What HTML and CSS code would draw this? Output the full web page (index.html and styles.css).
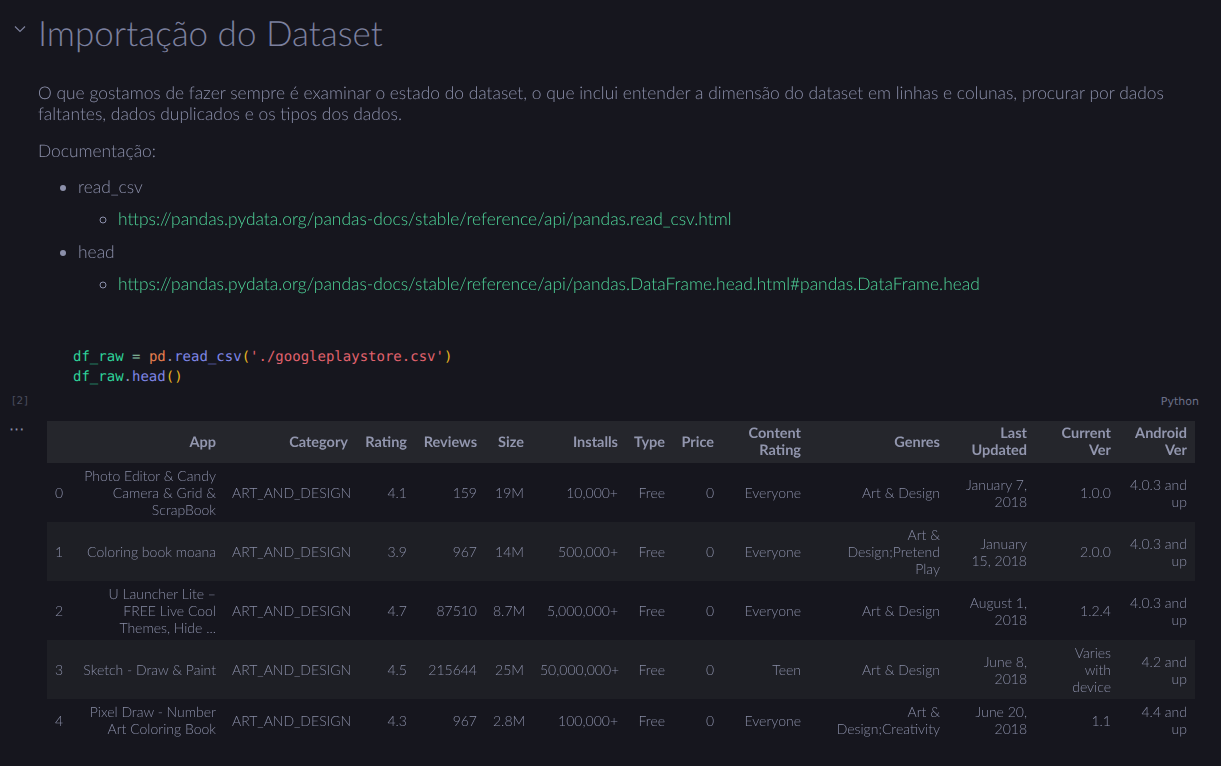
FILE: index.html
```html
<!DOCTYPE html>
<html lang="pt">
<head>
<meta charset="utf-8">
<title>Importação do Dataset</title>
<link rel="stylesheet" href="styles.css">
</head>
<body>
<div class="notebook">
  <section class="md-cell">
    <div class="md-head">
      <svg class="chevron" width="12" height="12" viewBox="0 0 12 12"><path d="M1 3.5 L6 8.5 L11 3.5" fill="none" stroke="#7c809c" stroke-width="1.2"/></svg>
      <h1 class="title">Importação do Dataset</h1>
    </div>
    <div class="md-body">
      <p>O que gostamos de fazer sempre é examinar o estado do dataset, o que inclui entender a dimensão do dataset em linhas e colunas, procurar por dados faltantes, dados duplicados e os tipos dos dados.</p>
      <p>Documentação:</p>
      <ul class="docs">
        <li>read_csv
          <ul class="sub"><li><a href="#">https://pandas.pydata.org/pandas-docs/stable/reference/api/pandas.read_csv.html</a></li></ul>
        </li>
        <li>head
          <ul class="sub"><li><a href="#">https://pandas.pydata.org/pandas-docs/stable/reference/api/pandas.DataFrame.head.html#pandas.DataFrame.head</a></li></ul>
        </li>
      </ul>
    </div>
  </section>

  <section class="code-cell">
    <pre class="code"><span class="v">df_raw</span> <span class="op">=</span> <span class="m">pd</span><span class="d">.</span><span class="f">read_csv</span><span class="p">(</span><span class="s">'./googleplaystore.csv'</span><span class="p">)</span>
<span class="v">df_raw</span><span class="d">.</span><span class="f">head</span><span class="p">()</span></pre>
    <div class="status">
      <span class="exec">[2]</span>
      <span class="lang">Python</span>
    </div>
    <div class="output-row">
      <div class="out-gutter">···</div>
      <div class="output">
        <table class="df">
          <colgroup>
            <col style="width:25px"><col style="width:152px"><col style="width:132px"><col style="width:59px"><col style="width:70px"><col style="width:47px"><col style="width:94px"><col style="width:47px"><col style="width:49px"><col style="width:87px"><col style="width:139px"><col style="width:87px"><col style="width:84px"><col style="width:76px">
          </colgroup>
          <thead>
            <tr><th></th><th>App</th><th>Category</th><th>Rating</th><th>Reviews</th><th>Size</th><th>Installs</th><th>Type</th><th>Price</th><th>Content Rating</th><th>Genres</th><th>Last Updated</th><th>Current Ver</th><th>Android Ver</th></tr>
          </thead>
          <tbody>
            <tr><th>0</th><td>Photo Editor &amp; Candy Camera &amp; Grid &amp; ScrapBook</td><td class="cat">ART_AND_DESIGN</td><td>4.1</td><td>159</td><td>19M</td><td>10,000+</td><td>Free</td><td>0</td><td>Everyone</td><td class="genre">Art &amp; Design</td><td class="date">January 7, 2018</td><td class="ver">1.0.0</td><td>4.0.3 and up</td></tr>
            <tr><th>1</th><td>Coloring book moana</td><td class="cat">ART_AND_DESIGN</td><td>3.9</td><td>967</td><td>14M</td><td>500,000+</td><td>Free</td><td>0</td><td>Everyone</td><td class="genre">Art &amp; Design;Pretend Play</td><td class="date">January 15, 2018</td><td class="ver">2.0.0</td><td>4.0.3 and up</td></tr>
            <tr><th>2</th><td>U Launcher Lite – FREE Live Cool Themes, Hide ...</td><td class="cat">ART_AND_DESIGN</td><td>4.7</td><td>87510</td><td>8.7M</td><td>5,000,000+</td><td>Free</td><td>0</td><td>Everyone</td><td class="genre">Art &amp; Design</td><td class="date">August 1, 2018</td><td class="ver">1.2.4</td><td>4.0.3 and up</td></tr>
            <tr><th>3</th><td>Sketch - Draw &amp; Paint</td><td class="cat">ART_AND_DESIGN</td><td>4.5</td><td>215644</td><td>25M</td><td>50,000,000+</td><td>Free</td><td>0</td><td>Teen</td><td class="genre">Art &amp; Design</td><td class="date">June 8, 2018</td><td class="ver">Varies with device</td><td>4.2 and up</td></tr>
            <tr><th>4</th><td>Pixel Draw - Number Art Coloring Book</td><td class="cat">ART_AND_DESIGN</td><td>4.3</td><td>967</td><td>2.8M</td><td>100,000+</td><td>Free</td><td>0</td><td>Everyone</td><td class="genre">Art &amp; Design;Creativity</td><td class="date">June 20, 2018</td><td class="ver">1.1</td><td>4.4 and up</td></tr>
          </tbody>
        </table>
      </div>
    </div>
  </section>
</div>
</body>
</html>
```

FILE: styles.css
```css
html, body {
  margin: 0;
  padding: 0;
  background: #16161e;
  height: 100%;
  overflow: hidden;
}

.notebook {
  font-family: Lato, "Noto Sans", sans-serif;
  font-weight: 300;
  color: #8c90ab;
  text-rendering: geometricPrecision;
}

.md-cell {
  padding: 12px 0 0 0;
}

.md-head {
  display: flex;
  align-items: center;
}

.chevron {
  margin-left: 14px;
  margin-right: 12px;
  margin-top: -8px;
}

.title {
  margin: 0;
  font-size: 35px;
  line-height: 42px;
  font-weight: 300;
  color: #7c809e;
}

.md-body {
  padding: 0 40px 0 38px;
  font-size: 17.4px;
  line-height: 21px;
  will-change: transform;
}

.md-body p {
  margin: 0;
  padding-top: 28px;
}

.md-body p + p {
  padding-top: 16px;
}

.docs {
  margin: 0;
  padding: 15px 0 0 40px;
  list-style: disc;
}

.docs > li {
  line-height: 21px;
  margin-bottom: 12px;
}

.docs > li + li {
  margin-top: 1px;
}

.sub {
  margin: 0;
  padding: 11px 0 0 40px;
  list-style: circle;
}

.sub a {
  color: #4fd69a;
  text-decoration: none;
}

.code-cell {
  padding-top: 41px;
}

.code {
  margin: 0 0 0 73px;
  font-family: "DejaVu Sans Mono", monospace;
  font-size: 14px;
  line-height: 20px;
  color: #a9b1d6;
}

.code .v { color: #2fd39a; }
.code .op { color: #8fc9a8; }
.code .m { color: #e77f4f; }
.code .d { color: #8a90b3; }
.code .f { color: #7f86e6; }
.code .p { color: #e6b422; }
.code .s { color: #e0626d; }

.status {
  display: flex;
  justify-content: space-between;
  align-items: center;
  padding: 5px 22px 0 12px;
  height: 18px;
  font-family: "DejaVu Sans", sans-serif;
  font-weight: 400;
}

.exec {
  font-size: 10.5px;
  color: #4b4e60;
  letter-spacing: 0.5px;
}

.lang {
  font-size: 11px;
  color: #6b6f88;
}

.output-row {
  display: flex;
  padding-top: 11px;
}

.out-gutter {
  width: 47px;
  flex: none;
  padding: 2px 0 0 9px;
  box-sizing: border-box;
  color: #8a8ea8;
  font-size: 16px;
  line-height: 14px;
  font-family: "DejaVu Sans", sans-serif;
  font-weight: 400;
}

.output {
  flex: 1;
}

.df {
  border-collapse: collapse;
  table-layout: fixed;
  width: 1148px;
  font-size: 14px;
  line-height: 17px;
  color: #898da6;
  will-change: transform;
}

.df th,
.df td {
  padding: 4px 8px;
  text-align: right;
  vertical-align: middle;
  font-weight: 300;
}

.df thead th {
  background: #25262c;
  color: #9296ae;
  font-weight: 700;
  font-size: 14.5px;
}

.df tbody th {
  text-align: left;
  font-weight: 300;
}

.df tbody tr:nth-child(even) {
  background: #1e1f25;
}

.df td.cat {
  text-align: left;
  white-space: nowrap;
}

.df td.genre {
  padding-left: 26px;
}

.df td.date {
  padding-left: 14px;
}

.df td.ver {
  padding-left: 26px;
}
```
